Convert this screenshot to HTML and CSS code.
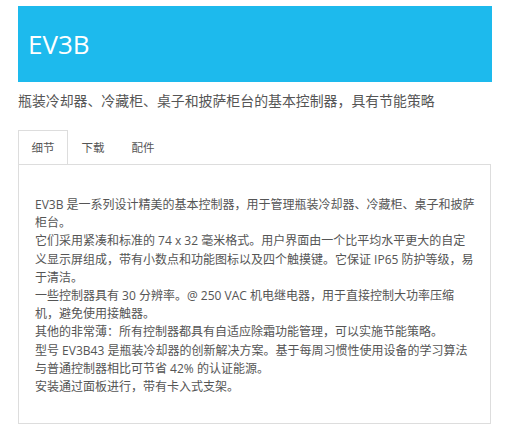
FILE: index.html
```html
<!DOCTYPE html>
<html lang="zh-CN">
<head>
    <meta charset="UTF-8">
    <meta name="viewport" content="width=device-width, initial-scale=1.0">
    <title>EV3B</title>
    <link rel="stylesheet" href="styles.css">
</head>
<body>
    <div class="product">
        <header class="product-header">
            <h1>EV3B</h1>
        </header>
        <p class="subtitle">瓶装冷却器、冷藏柜、桌子和披萨柜台的基本控制器，具有节能策略</p>
        <ul class="tabs">
            <li class="tab active">细节</li>
            <li class="tab">下载</li>
            <li class="tab">配件</li>
        </ul>
        <div class="tab-panel">
            <p>EV3B 是一系列设计精美的基本控制器，用于管理瓶装冷却器、冷藏柜、桌子和披萨柜台。<br>
            它们采用紧凑和标准的 74 x 32 毫米格式。用户界面由一个比平均水平更大的自定义显示屏组成，带有小数点和功能图标以及四个触摸键。它保证 IP65 防护等级，易于清洁。<br>
            一些控制器具有 30 分辨率。@ 250 VAC 机电继电器，用于直接控制大功率压缩机，避免使用接触器。<br>
            其他的非常薄：所有控制器都具有自适应除霜功能管理，可以实施节能策略。<br>
            型号 EV3B43 是瓶装冷却器的创新解决方案。基于每周习惯性使用设备的学习算法与普通控制器相比可节省 42% 的认证能源。<br>
            安装通过面板进行，带有卡入式支架。</p>
        </div>
    </div>
</body>
</html>
```

FILE: styles.css
```css
body {
    margin: 0;
    padding: 6px 0 0 18px;
    font-family: "Open Sans", "Noto Sans CJK SC", sans-serif;
    color: #555;
    background-color: #fff;
}
.product {
    width: 474px;
}
.product-header {
    height: 76px;
    display: flex;
    align-items: center;
    padding-left: 10px;
    background-color: #1dbaed;
}
.product-header h1 {
    margin: 0;
    font-size: 26px;
    font-weight: normal;
    color: #fff;
}
.subtitle {
    margin: 9px 0 19px;
    font-size: 13.9px;
    line-height: 20px;
    color: #555;
}
.tabs {
    display: flex;
    margin: 0;
    padding: 0;
    list-style: none;
}
.tab {
    padding: 0 12.5px;
    height: 33px;
    line-height: 33px;
    font-size: 11.5px;
    color: #555;
    border: 1px solid transparent;
    border-bottom: none;
}
.tab.active {
    border-color: #ddd;
    background-color: #fff;
    margin-bottom: -1px;
    position: relative;
}
.tab-panel {
    width: 441px;
    padding: 31px 14px 27px 16px;
    border: 1px solid #ddd;
}
.tab-panel p {
    margin: 0;
    font-size: 12px;
    line-height: 18.2px;
    color: #555;
}
```
